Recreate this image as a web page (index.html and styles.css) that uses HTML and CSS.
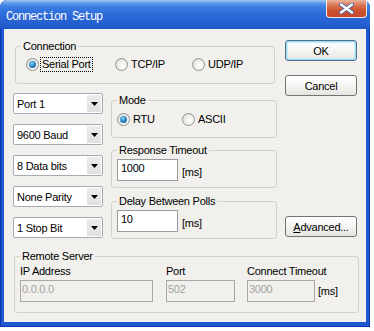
FILE: index.html
```html
<!DOCTYPE html>
<html lang="en">
<head>
    <meta charset="UTF-8">
    <title>Connection Setup</title>
    <link rel="stylesheet" href="styles.css">
</head>
<body>
    <div class="window">
        <div class="titlebar">
            <span class="title">Connection Setup</span>
            <div class="close-btn">
                <svg width="15" height="11" viewBox="0 0 15 11">
                    <path d="M2 1.5 L13 9.5 M13 1.5 L2 9.5" stroke="#3a5aa8" stroke-width="4" stroke-linecap="round"/>
                    <path d="M2 1.5 L13 9.5 M13 1.5 L2 9.5" stroke="#ffffff" stroke-width="2.4" stroke-linecap="round"/>
                </svg>
            </div>
        </div>

        <div class="client">
            <div class="top-area">
                <div class="left-area">
                    <fieldset class="group conn-group">
                        <legend>Connection</legend>
                        <div class="radio-row">
                            <label class="radio checked w-serial"><span class="dot"></span><span class="txt focus">Serial Port</span></label>
                            <label class="radio w-tcp"><span class="dot"></span><span class="txt">TCP/IP</span></label>
                            <label class="radio"><span class="dot"></span><span class="txt">UDP/IP</span></label>
                        </div>
                    </fieldset>

                    <div class="settings">
                        <div class="combos">
                            <div class="combo"><span>Port 1</span><span class="arrow"><svg width="7" height="4" viewBox="0 0 7 4"><polygon points="0,0 7,0 3.5,4" fill="#000"/></svg></span></div>
                            <div class="combo"><span>9600 Baud</span><span class="arrow"><svg width="7" height="4" viewBox="0 0 7 4"><polygon points="0,0 7,0 3.5,4" fill="#000"/></svg></span></div>
                            <div class="combo"><span>8 Data bits</span><span class="arrow"><svg width="7" height="4" viewBox="0 0 7 4"><polygon points="0,0 7,0 3.5,4" fill="#000"/></svg></span></div>
                            <div class="combo"><span>None Parity</span><span class="arrow"><svg width="7" height="4" viewBox="0 0 7 4"><polygon points="0,0 7,0 3.5,4" fill="#000"/></svg></span></div>
                            <div class="combo"><span>1 Stop Bit</span><span class="arrow"><svg width="7" height="4" viewBox="0 0 7 4"><polygon points="0,0 7,0 3.5,4" fill="#000"/></svg></span></div>
                        </div>

                        <div class="groups">
                            <fieldset class="group mode-group">
                                <legend>Mode</legend>
                                <div class="radio-row">
                                    <label class="radio checked w-rtu"><span class="dot"></span><span class="txt">RTU</span></label>
                                    <label class="radio"><span class="dot"></span><span class="txt">ASCII</span></label>
                                </div>
                            </fieldset>

                            <fieldset class="group edit-group">
                                <legend>Response Timeout</legend>
                                <div class="edit-row">
                                    <div class="edit">1000</div>
                                    <span class="unit">[ms]</span>
                                </div>
                            </fieldset>

                            <fieldset class="group edit-group delay-group">
                                <legend>Delay Between Polls</legend>
                                <div class="edit-row">
                                    <div class="edit">10</div>
                                    <span class="unit">[ms]</span>
                                </div>
                            </fieldset>
                        </div>
                    </div>
                </div>

                <div class="buttons">
                    <button class="btn default">OK</button>
                    <button class="btn cancel">Cancel</button>
                    <button class="btn advanced"><u>A</u>dvanced...</button>
                </div>
            </div>

            <fieldset class="group remote-group">
                <legend>Remote Server</legend>
                <div class="remote-grid">
                    <div class="field">
                        <span class="field-label">IP Address</span>
                        <div class="edit disabled ip">0.0.0.0</div>
                    </div>
                    <div class="field">
                        <span class="field-label">Port</span>
                        <div class="edit disabled port">502</div>
                    </div>
                    <div class="field">
                        <span class="field-label">Connect Timeout</span>
                        <div class="edit-row">
                            <div class="edit disabled timeout">3000</div>
                            <span class="unit">[ms]</span>
                        </div>
                    </div>
                </div>
            </fieldset>
        </div>
    </div>
</body>
</html>
```

FILE: styles.css
```css
* {
    box-sizing: border-box;
}

body {
    margin: 0;
    background: #ffffff;
    font-family: "Liberation Sans", Arial, sans-serif;
    font-size: 11px;
    letter-spacing: -0.25px;
    color: #000;
}

.window {
    width: 370px;
    height: 327px;
    display: flex;
    flex-direction: column;
    background: #1f57d3;
    border: 1px solid #0b34b0;
    border-top: none;
    border-radius: 7px 7px 0 0;
}

.titlebar {
    height: 29px;
    margin: 0 -1px;
    display: flex;
    align-items: flex-start;
    padding: 0 3px 0 6px;
    border-radius: 7px 7px 0 0;
    background: linear-gradient(#a6c8f3 0, #5d9aea 3px, #3a7de2 7px, #2d6bda 14px, #2661d2 22px, #1f56c8 29px);
}

.title {
    margin-top: 10px;
    font-family: "Liberation Mono", "DejaVu Sans Mono", monospace;
    font-size: 12px;
    line-height: 14px;
    letter-spacing: -1.2px;
    color: #ffffff;
}

.close-btn {
    margin-left: auto;
    width: 41px;
    height: 18px;
    display: flex;
    align-items: center;
    justify-content: center;
    border: 1px solid #f2e6e0;
    border-top: none;
    border-radius: 0 0 4px 4px;
    background: linear-gradient(#eab39c 0, #dc7a58 5px, #cd5530 10px, #c4472a 18px);
}

.client {
    flex: 1;
    margin: 0 3px 4px;
    padding: 11px 0 0 9px;
    background: #f1f0ec;
}

.top-area {
    display: flex;
    gap: 8px;
}

.left-area {
    width: 264px;
}

/* group boxes */
.group {
    margin: 0;
    padding: 0 5px;
    min-width: 0;
    border: 1px solid #d3d2c6;
    border-radius: 3px;
}

.group legend {
    padding: 0 2px;
    line-height: 13px;
}

.conn-group {
    width: 260px;
    margin-left: 2px;
    padding-top: 4px;
    padding-bottom: 11px;
}

.conn-group .radio-row {
    padding-left: 5px;
}

.radio-row {
    display: flex;
    height: 15px;
    align-items: center;
}

.radio {
    display: flex;
    align-items: center;
}

.w-serial { width: 89px; }
.w-tcp { width: 77px; }
.w-rtu { width: 65px; }

.dot {
    position: relative;
    width: 13px;
    height: 13px;
    border: 1px solid #8f9090;
    border-radius: 50%;
    background: radial-gradient(circle at 65% 65%, #ffffff 0, #f4f4f2 30%, #d6d6d2 100%);
    margin-right: 1px;
}

.checked .dot::after {
    content: "";
    position: absolute;
    left: 2px;
    top: 2px;
    width: 7px;
    height: 7px;
    border-radius: 50%;
    background: radial-gradient(circle at 40% 35%, #8fdcf8 0, #3f9ad4 35%, #1a5f9c 75%, #134a7e 100%);
}

.txt {
    border: 1px dotted transparent;
    padding: 0 1px;
    line-height: 13px;
}

.txt.focus {
    border-color: #000;
}

/* serial settings */
.settings {
    display: flex;
    gap: 8px;
    margin-top: 9px;
}

.combos {
    width: 90px;
    display: flex;
    flex-direction: column;
    gap: 10px;
}

.combo {
    height: 21px;
    display: flex;
    align-items: center;
    padding: 0 1px 0 3px;
    border: 1px solid #a6abb3;
    border-radius: 2px;
    background: #ffffff;
}

.combo .arrow {
    margin-left: auto;
    width: 14px;
    height: 17px;
    display: flex;
    align-items: center;
    justify-content: center;
    background: linear-gradient(#ececec, #e0e0e0);
}

.groups {
    width: 166px;
    margin-top: 1px;
    display: flex;
    flex-direction: column;
    gap: 6px;
}

.mode-group {
    padding-top: 5px;
    padding-bottom: 10px;
}

.edit-group {
    padding-top: 2px;
    padding-bottom: 6px;
}

.delay-group {
    margin-top: 1px;
}

.edit-row {
    display: flex;
    align-items: flex-end;
}

.edit {
    width: 61px;
    height: 22px;
    padding: 2px 3px 0;
    line-height: 13px;
    border: 1px solid #9b9b9b;
    background: #ffffff;
}

.unit {
    margin-left: 4px;
    margin-bottom: 2px;
    line-height: 13px;
}

/* buttons */
.buttons {
    width: 72px;
    display: flex;
    flex-direction: column;
}

.btn {
    height: 21px;
    width: 72px;
    padding: 0;
    font-family: "Liberation Sans", Arial, sans-serif;
    font-size: 11px;
    letter-spacing: -0.25px;
    color: #000;
    border: 1px solid #737373;
    border-radius: 3px;
    background: linear-gradient(#ffffff 0, #f6f6f4 45%, #e4e4e0 100%);
}

.btn.default {
    border-color: #4f6f8c;
    box-shadow: inset 0 0 0 1px #9fdaf2, inset 0 0 0 2px #c8ecf8;
}

.btn.cancel {
    margin-top: 14px;
}

.btn.advanced {
    margin-top: auto;
    margin-bottom: 2px;
}

/* remote server */
.remote-group {
    width: 345px;
    margin: 11px 0 0 1px;
    padding-top: 2px;
    padding-bottom: 10px;
}

.remote-grid {
    display: grid;
    grid-template-columns: 146px 81px auto;
}

.field-label {
    display: block;
    line-height: 13px;
    margin-bottom: 2px;
}

.edit.disabled {
    background: #f1f0ec;
    color: #a3a3a3;
    border-color: #a8a8a8;
    padding-left: 1px;
}

.edit.ip { width: 133px; }
.edit.port { width: 69px; }
.edit.timeout { width: 68px; }

.field .unit {
    margin-left: 3px;
    margin-bottom: 4px;
}
```
